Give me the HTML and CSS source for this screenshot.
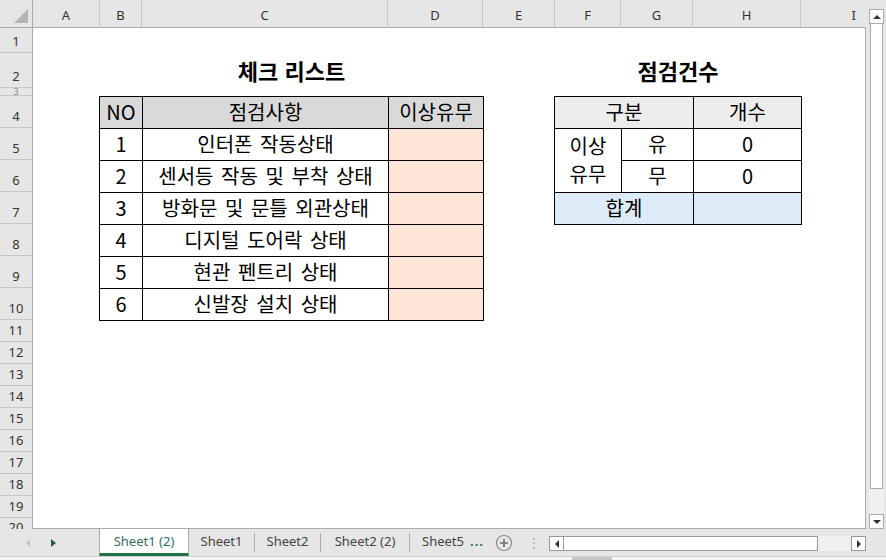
FILE: index.html
```html
<!DOCTYPE html>
<html lang="ko">
<head>
    <meta charset="UTF-8">
    <title>체크 리스트</title>
    <link rel="stylesheet" href="styles.css">
</head>
<body>
    <div class="app">
        <div class="top">
            <div class="sheet">
                <div class="corner"><span class="tri"></span></div>
                <div class="ch">A</div>
                <div class="ch">B</div>
                <div class="ch">C</div>
                <div class="ch">D</div>
                <div class="ch">E</div>
                <div class="ch">F</div>
                <div class="ch">G</div>
                <div class="ch">H</div>
                <div class="ch last">I</div>

                <div class="rh">1</div>
                <div class="rh">2</div>
                <div class="rh short">3</div>
                <div class="rh">4</div>
                <div class="rh">5</div>
                <div class="rh">6</div>
                <div class="rh">7</div>
                <div class="rh">8</div>
                <div class="rh">9</div>
                <div class="rh">10</div>
                <div class="rh">11</div>
                <div class="rh">12</div>
                <div class="rh">13</div>
                <div class="rh">14</div>
                <div class="rh">15</div>
                <div class="rh">16</div>
                <div class="rh">17</div>
                <div class="rh">18</div>
                <div class="rh">19</div>
                <div class="rh cut">20</div>

                <div class="body"></div>

                <div class="title title-check">체크 리스트</div>
                <div class="title title-count">점검건수</div>

                <div class="area-check">
                    <table class="grid check">
                        <colgroup><col class="c-no"><col class="c-item"><col class="c-flag"></colgroup>
                        <tr class="head"><td>NO</td><td>점검사항</td><td>이상유무</td></tr>
                        <tr><td>1</td><td>인터폰 작동상태</td><td class="peach"></td></tr>
                        <tr><td>2</td><td>센서등 작동 및 부착 상태</td><td class="peach"></td></tr>
                        <tr><td>3</td><td>방화문 및 문틀 외관상태</td><td class="peach"></td></tr>
                        <tr><td>4</td><td>디지털 도어락 상태</td><td class="peach"></td></tr>
                        <tr><td>5</td><td>현관 펜트리 상태</td><td class="peach"></td></tr>
                        <tr><td>6</td><td>신발장 설치 상태</td><td class="peach"></td></tr>
                    </table>
                </div>

                <div class="area-count">
                    <table class="grid count">
                        <colgroup><col class="c-f"><col class="c-g"><col class="c-h"></colgroup>
                        <tr class="head"><td colspan="2">구분</td><td>개수</td></tr>
                        <tr><td rowspan="2" class="two">이상<br>유무</td><td>유</td><td>0</td></tr>
                        <tr><td>무</td><td>0</td></tr>
                        <tr class="sum"><td colspan="2">합계</td><td></td></tr>
                    </table>
                </div>
            </div>

            <div class="vscroll">
                <div class="sbtn up"><span class="arr-up"></span></div>
                <div class="vthumb"></div>
                <div class="vtrack"></div>
                <div class="sbtn down"><span class="arr-down"></span></div>
            </div>
        </div>

        <div class="bottom">
            <div class="tabbar">
                <div class="nav">
                    <span class="nav-l"></span>
                    <span class="nav-r"></span>
                </div>
                <div class="tab active">Sheet1 (2)</div>
                <div class="tab">Sheet1</div>
                <div class="tab">Sheet2</div>
                <div class="tab">Sheet2 (2)</div>
                <div class="tab plain">Sheet5</div>
                <div class="more">...</div>
                <div class="add">
                    <svg width="18" height="18" viewBox="0 0 18 18">
                        <circle cx="9" cy="9" r="7.5" fill="none" stroke="#8a8a8a" stroke-width="1.2"/>
                        <path d="M9 5v8M5 9h8" stroke="#6e6e6e" stroke-width="1.6"/>
                    </svg>
                </div>
                <div class="grip">⋮</div>
                <div class="hscroll">
                    <div class="hbtn"><span class="arr-left"></span></div>
                    <div class="hthumb"></div>
                    <div class="htrack"></div>
                    <div class="hbtn"><span class="arr-right"></span></div>
                </div>
            </div>
            <div class="status"><span class="status-mark"></span></div>
        </div>
    </div>
</body>
</html>
```

FILE: styles.css
```css
*{margin:0;padding:0;box-sizing:border-box}
body{width:886px;height:560px;overflow:hidden;background:#e6e6e6;font-family:"Noto Sans","Noto Sans CJK KR",sans-serif}
.app{display:flex;flex-direction:column;height:560px}
.top{display:flex;height:529px}

/* sheet grid: header row/col + columns A..I */
.sheet{flex:1;display:grid;grid-template-columns:33px 67px 42px 246px 95px 72px 66px 72px 108px 1fr;grid-template-rows:28px 25px 35px 8px repeat(7,32px) repeat(9,22px) 1fr;overflow:hidden}
.corner{background:#e6e6e6;border-right:1px solid #ababab;border-bottom:1px solid #ababab;position:relative}
.tri{position:absolute;right:4px;bottom:4px;width:0;height:0;border-left:14px solid transparent;border-bottom:14px solid #b4b4b4}
.ch{background:#e6e6e6;border-right:1px solid #c6c6c6;border-bottom:1px solid #ababab;font-size:13px;color:#333;display:flex;align-items:center;justify-content:center;padding-top:2px}
.ch.last{border-right:none;justify-content:flex-end;padding-right:10px}
.rh{grid-column:1;background:#e6e6e6;border-right:1px solid #ababab;border-bottom:1px solid #c6c6c6;font-size:13px;color:#333;display:flex;align-items:flex-end;justify-content:center;padding-bottom:3px;overflow:hidden;line-height:16px}
.rh.short{line-height:8px;padding:0;align-items:flex-start;font-size:9px;color:#888}
.rh.cut{align-items:flex-start;padding:4px 0 0;line-height:10px;border-bottom:none}
.body{grid-column:2/11;grid-row:2/22;background:#fff;border-right:1px solid #ababab;border-bottom:1px solid #ababab}

.title{grid-row:3;font-family:"Noto Sans CJK KR",sans-serif;font-weight:700;font-size:22px;color:#000;display:flex;align-items:flex-end;justify-content:center;padding-bottom:4px;line-height:28px}
.title-check{grid-column:3/6}
.title-count{grid-column:7/10}

.area-check{grid-column:3/6;grid-row:5/12;margin-left:-1px}
.area-count{grid-column:7/10;grid-row:5/9;margin-left:-1px}

.grid{border-collapse:collapse;table-layout:fixed;width:calc(100% + 1px);height:100%;font-family:"Noto Sans CJK KR",sans-serif;font-size:20px;word-spacing:2px;color:#000}
.grid td{border:1px solid #000;text-align:center;vertical-align:middle;line-height:24px;padding:0 0 2px;white-space:nowrap;height:32px}
.c-no{width:43px}
.c-item{width:246px}
.c-flag{width:95px}
.check .head td{background:#d9d9d9}
.peach{background:#fce4d6}

.c-f{width:67px}
.c-g{width:72px}
.c-h{width:108px}
.count .head td{background:#ededed}
.count .sum td{background:#ddebf7}
.grid td.two{line-height:28px}

/* vertical scrollbar */
.vscroll{width:20px;display:flex;flex-direction:column;padding:9px 2px 0 3px}
.sbtn{height:15px;background:#fff;border:1px solid #ababab;display:flex;align-items:center;justify-content:center}
.arr-up{width:0;height:0;border-left:4px solid transparent;border-right:4px solid transparent;border-bottom:4px solid #333}
.arr-down{width:0;height:0;border-left:4px solid transparent;border-right:4px solid transparent;border-top:4px solid #333}
.vthumb{height:465px;background:#fff;border:1px solid #ababab;border-top:none;margin:0 1px}
.vtrack{flex:1;background:#f0f0f0}

/* sheet tabs */
.bottom{flex:1;display:flex;flex-direction:column}
.tabbar{height:27px;display:flex;align-items:stretch;font-size:13px;color:#444}
.nav{width:99px;display:flex;align-items:center;gap:21px;padding-left:26px}
.nav-l{width:0;height:0;border-top:4px solid transparent;border-bottom:4px solid transparent;border-right:4px solid #c3c3c3}
.nav-r{width:0;height:0;border-top:4px solid transparent;border-bottom:4px solid transparent;border-left:5px solid #1e5e47}
.tab{display:flex;align-items:center;justify-content:center;padding:0 0 3px;border-right:1px solid #ababab;height:19px;align-self:center}
.tab:nth-child(3){width:66px}
.tab:nth-child(4){width:66px}
.tab:nth-child(5){width:89px}
.tab.plain{border-right:none;width:58px;justify-content:flex-start;padding-left:12px}
.tab.active{width:90px;height:27px;background:#fff;color:#2f6f5e;border-left:1px solid #ababab;border-right:1px solid #ababab;border-bottom:3px solid #217346;padding:0}
.more{width:22px;color:#217346;font-weight:700;display:flex;align-items:center;padding:0 0 4px 2px;letter-spacing:1px}
.add{width:28px;display:flex;align-items:center;justify-content:center}
.grip{width:31px;color:#b0b0b0;display:flex;align-items:center;justify-content:center;font-size:14px}
.hscroll{width:317px;margin-top:7px;height:15px;display:flex}
.hbtn{width:15px;background:#fff;border:1px solid #9a9a9a;display:flex;align-items:center;justify-content:center}
.arr-left{width:0;height:0;border-top:4px solid transparent;border-bottom:4px solid transparent;border-right:4px solid #333}
.arr-right{width:0;height:0;border-top:4px solid transparent;border-bottom:4px solid transparent;border-left:4px solid #333}
.hthumb{width:254px;background:#fff;border:1px solid #9a9a9a;border-left:none}
.htrack{flex:1;background:#f0f0f0}
.status{flex:1;border-top:1px solid #d0d0d0;background:#f3f3f3;position:relative}
.status-mark{position:absolute;left:572px;top:0;width:40px;height:4px;background:#c8c8c8}
```
